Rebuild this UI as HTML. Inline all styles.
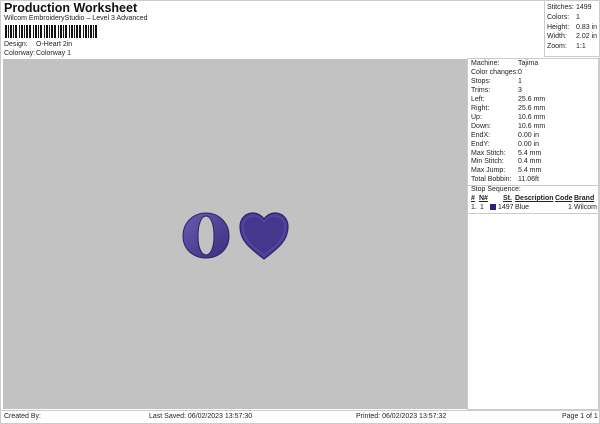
<!DOCTYPE html>
<html><head><meta charset="utf-8"><style>
*{margin:0;padding:0;box-sizing:border-box}
body{width:600px;height:424px;background:#fff;font-family:"Liberation Sans",sans-serif;color:#222;position:relative;overflow:hidden;font-size:7px}
.a{position:absolute;white-space:nowrap}
</style></head><body>
<div class="a" style="left:0;top:0;width:600px;height:424px;border:1px solid #ccc"></div>
<div class="a" style="left:4px;top:1px;font-size:12.5px;font-weight:bold;color:#111">Production Worksheet</div>
<div class="a" style="left:4px;top:15px;font-size:7px">Wilcom EmbroideryStudio – Level 3 Advanced</div>
<svg class="a" style="left:5px;top:25px" width="93" height="13">
<g fill="#111">
<rect x="0" y="0" width="2" height="13"/><rect x="3" width="1" height="13"/><rect x="5" width="2" height="13"/><rect x="8" width="1" height="13"/><rect x="10" width="2" height="13"/><rect x="14" width="1" height="13"/><rect x="16" width="2" height="13"/><rect x="19" width="1" height="13"/><rect x="21" width="2" height="13"/><rect x="24" width="2" height="13"/><rect x="28" width="1" height="13"/><rect x="30" width="2" height="13"/><rect x="33" width="1" height="13"/><rect x="35" width="2" height="13"/><rect x="39" width="1" height="13"/><rect x="41" width="2" height="13"/><rect x="44" width="1" height="13"/><rect x="46" width="2" height="13"/><rect x="49" width="2" height="13"/><rect x="53" width="1" height="13"/><rect x="55" width="2" height="13"/><rect x="58" width="1" height="13"/><rect x="60" width="2" height="13"/><rect x="64" width="1" height="13"/><rect x="66" width="2" height="13"/><rect x="69" width="1" height="13"/><rect x="71" width="2" height="13"/><rect x="74" width="2" height="13"/><rect x="78" width="1" height="13"/><rect x="80" width="2" height="13"/><rect x="83" width="1" height="13"/><rect x="85" width="2" height="13"/><rect x="88" width="1" height="13"/><rect x="90" width="2" height="13"/>
</g></svg>
<div class="a" style="left:4px;top:41px">Design:</div><div class="a" style="left:36px;top:41px">O-Heart 2in</div>
<div class="a" style="left:4px;top:50px">Colorway:</div><div class="a" style="left:36px;top:50px">Colorway 1</div>

<div class="a" style="left:544px;top:0;width:55px;height:57px;border-left:1px solid #ccc;border-bottom:1px solid #ccc"></div>
<div class="a" style="left:547px;top:3px;line-height:9.8px">Stitches:<br>Colors:<br>Height:<br>Width:<br>Zoom:</div>
<div class="a" style="left:576px;top:3px;line-height:9.8px">1499<br>1<br>0.83 in<br>2.02 in<br>1:1</div>

<div class="a" style="left:3px;top:59px;width:464px;height:350px;background:#c2c2c2"></div>
<div class="a" style="left:467px;top:58px;width:132px;height:352px;border:1px solid #ccc"></div>
<div class="a" style="left:471px;top:60px;line-height:8.95px">Machine:<br>Color changes:<br>Stops:<br>Trims:<br>Left:<br>Right:<br>Up:<br>Down:<br>EndX:<br>EndY:<br>Max Stitch:<br>Min Stitch:<br>Max Jump:<br>Total Bobbin:</div>
<div class="a" style="left:518px;top:60px;line-height:8.95px">Tajima<br>0<br>1<br>3<br>25.6 mm<br>25.6 mm<br>10.6 mm<br>10.6 mm<br>0.00 in<br>0.00 in<br>5.4 mm<br>0.4 mm<br>5.4 mm<br>11.06ft</div>
<div class="a" style="left:468px;top:185px;width:130px;border-top:1px solid #ccc"></div>
<div class="a" style="left:471px;top:186px">Stop Sequence:</div>
<div class="a" style="left:471px;top:195px;font-weight:bold;text-decoration:underline">#</div>
<div class="a" style="left:479px;top:195px;font-weight:bold;text-decoration:underline">N#</div>
<div class="a" style="left:503px;top:195px;font-weight:bold;text-decoration:underline">St.</div>
<div class="a" style="left:515px;top:195px;font-weight:bold;text-decoration:underline">Description</div>
<div class="a" style="left:555px;top:195px;font-weight:bold;text-decoration:underline">Code</div>
<div class="a" style="left:574px;top:195px;font-weight:bold;text-decoration:underline">Brand</div>
<div class="a" style="left:471px;top:204px">1.</div><div class="a" style="left:480px;top:204px">1</div>
<div class="a" style="left:490px;top:204px;width:6px;height:6px;background:#2a1f7a"></div>
<div class="a" style="left:498px;top:204px">1497</div><div class="a" style="left:515px;top:204px">Blue</div>
<div class="a" style="left:568px;top:204px">1</div><div class="a" style="left:574px;top:204px">Wilcom</div>
<div class="a" style="left:468px;top:213px;width:130px;border-top:1px solid #ccc"></div>

<svg class="a" style="left:0;top:0" width="600" height="424">
<defs><linearGradient id="g" x1="0" y1="0" x2="1" y2="1"><stop offset="0" stop-color="#6a5cb0"/><stop offset="1" stop-color="#3a2d7e"/></linearGradient></defs>
<path fill-rule="evenodd" fill="url(#g)" stroke="#2c2168" stroke-width="1" d="M206 213 C219 213 229 223 229 236 C229 249 219 258 206 258 C193 258 183 249 183 236 C183 223 193 213 206 213 Z M206 216 C201 216 198 225 198 236 C198 247 201 255 206 255 C211 255 214 247 214 236 C214 225 211 216 206 216 Z"/>
<path d="M264 259 C251 249 240 241 240 227 C240 218 246 213 253 213 C258 213 262 216 264 219 C266 216 270 213 275 213 C282 213 288 218 288 227 C288 241 277 249 264 259 Z" fill="#4a3d95" stroke="#2c2168" stroke-width="1.2"/>
<path d="M264 255 C252 246 243 239 243 227 C243 220 248 216 254 216 C258 216 262 219 264 222 C266 219 270 216 274 216 C280 216 285 220 285 227 C285 239 276 246 264 255 Z" fill="#44378c" stroke="#5e51aa" stroke-width="0.8"/>
</svg>

<div class="a" style="left:0;top:410px;width:600px;border-top:1px solid #ccc"></div>
<div class="a" style="left:4px;top:413px">Created By:</div>
<div class="a" style="left:149px;top:413px">Last Saved: 06/02/2023 13:57:30</div>
<div class="a" style="left:356px;top:413px">Printed: 06/02/2023 13:57:32</div>
<div class="a" style="left:562px;top:413px">Page 1 of 1</div>
</body></html>
